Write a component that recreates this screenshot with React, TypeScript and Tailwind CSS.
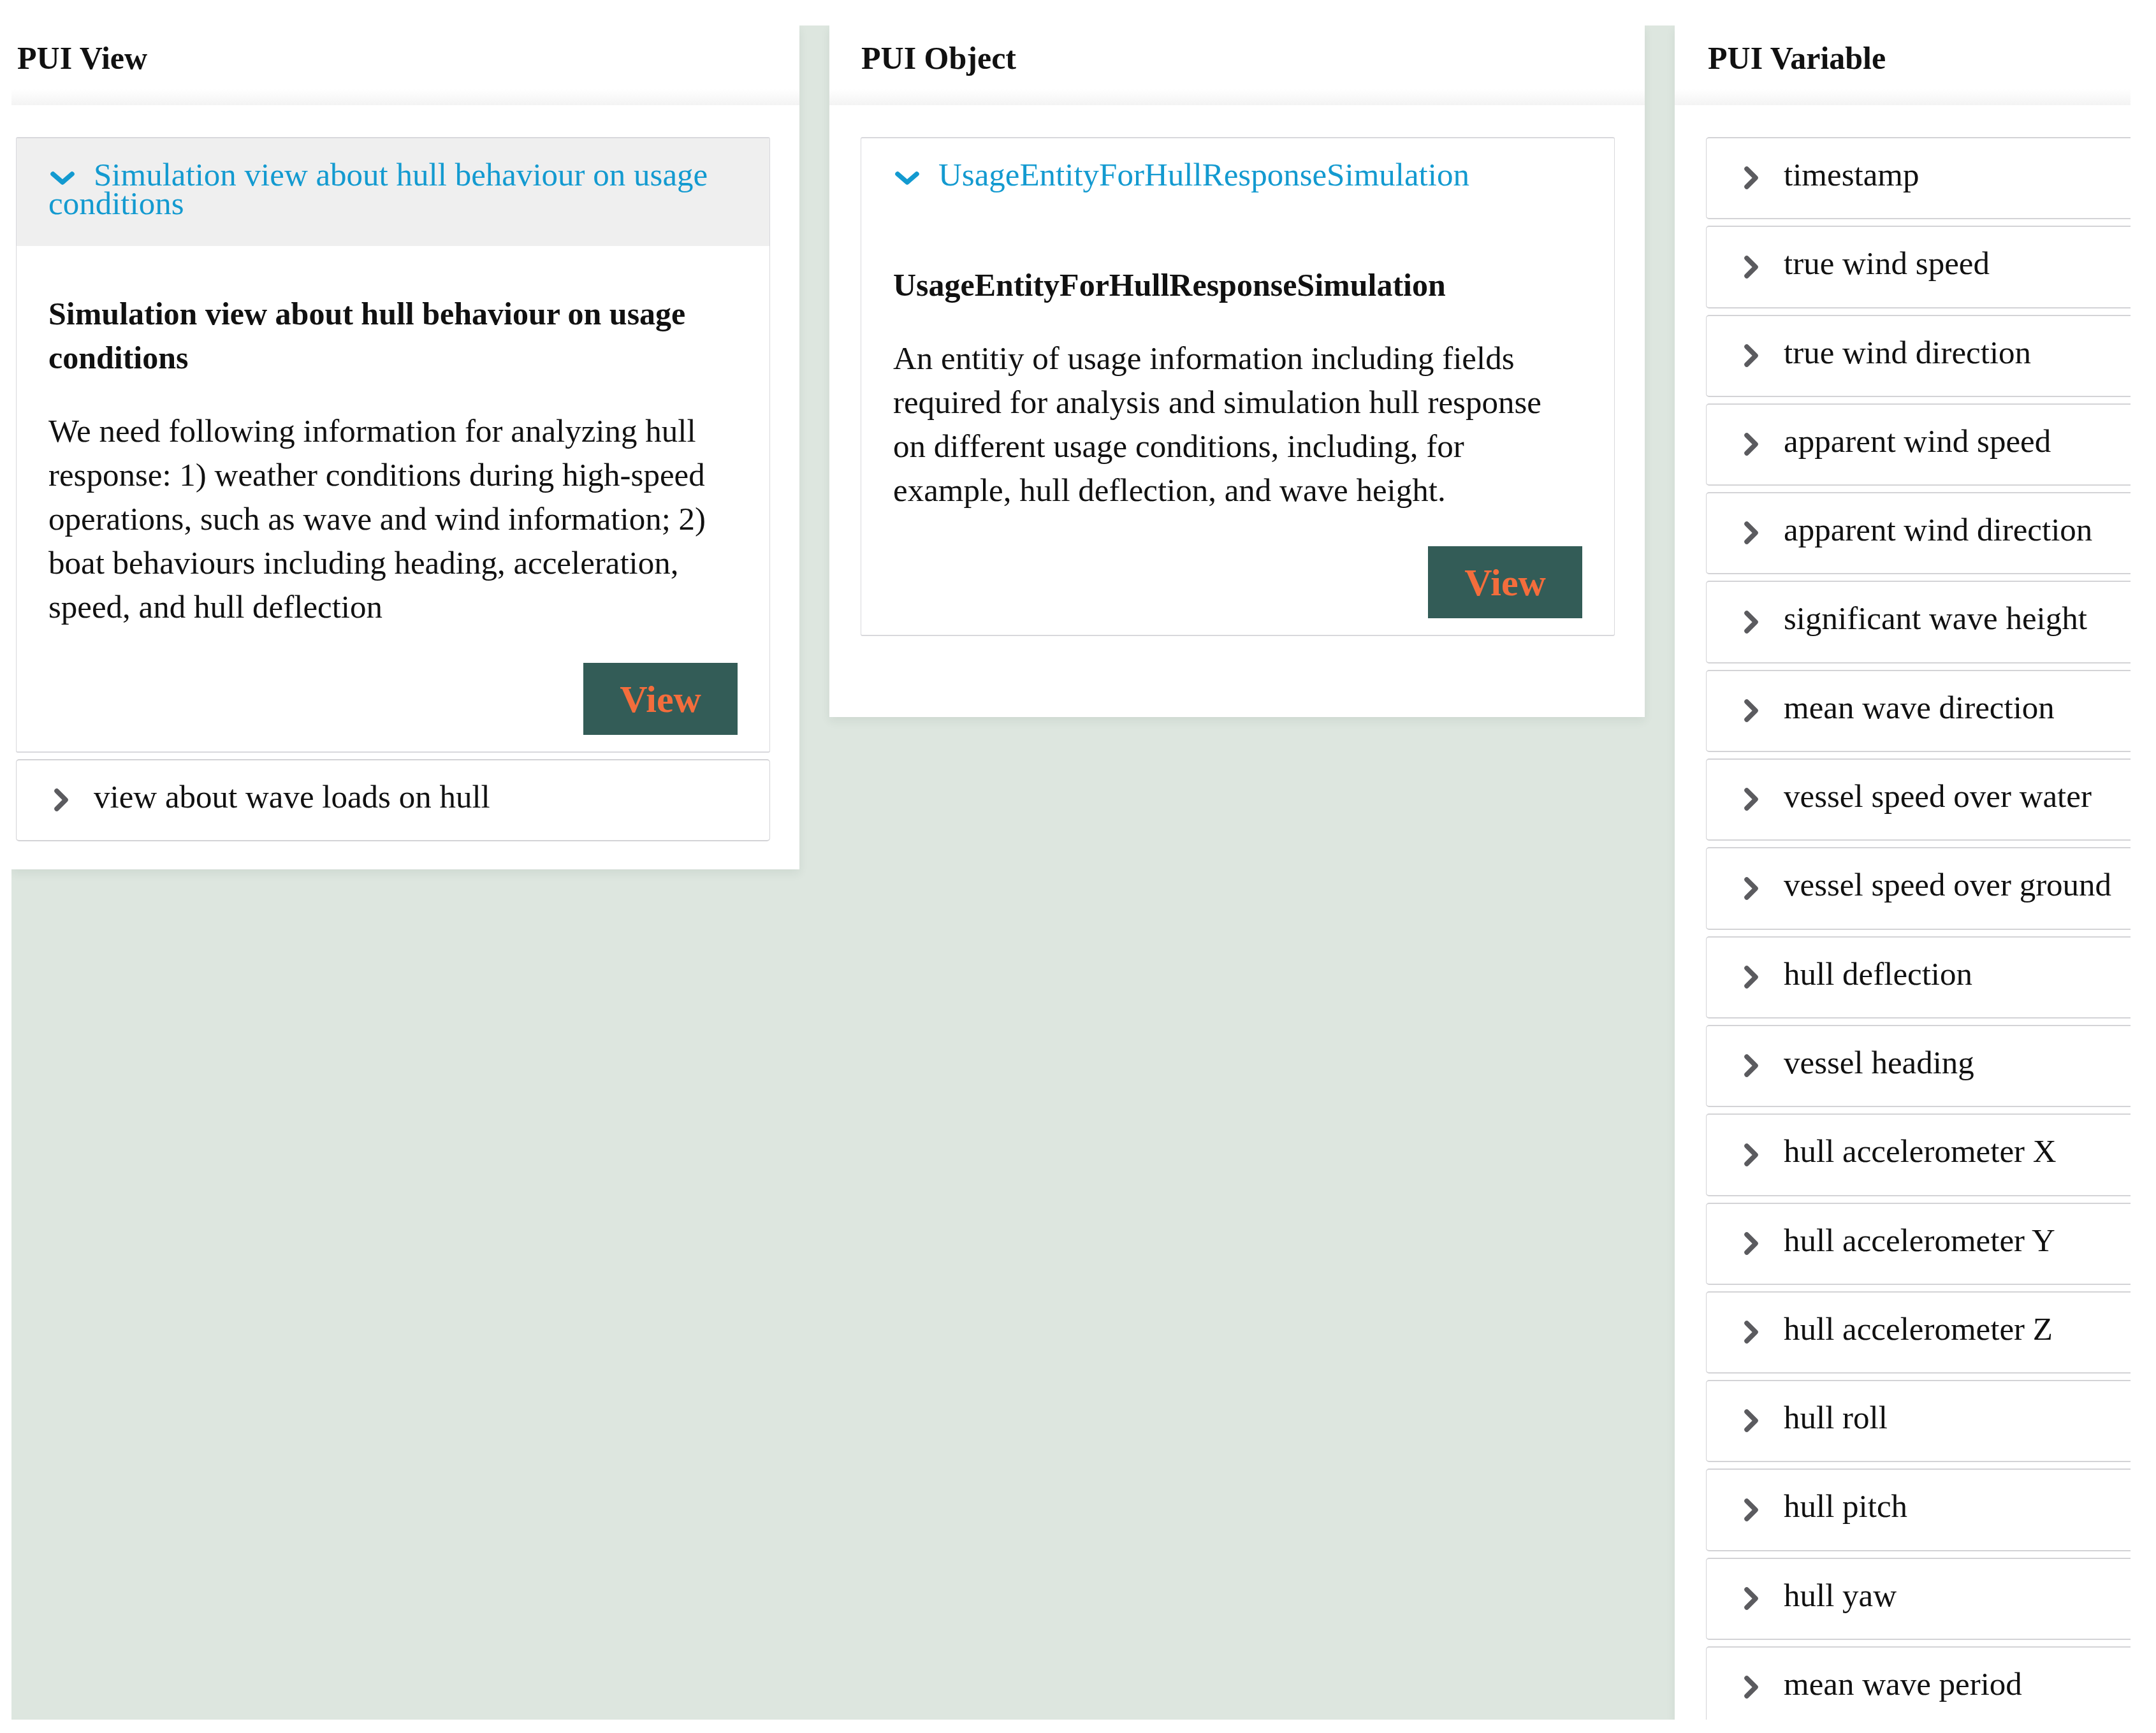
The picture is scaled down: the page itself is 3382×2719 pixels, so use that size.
import type { ReactNode } from "react";

const variables = [
  "timestamp",
  "true wind speed",
  "true wind direction",
  "apparent wind speed",
  "apparent wind direction",
  "significant wave height",
  "mean wave direction",
  "vessel speed over water",
  "vessel speed over ground",
  "hull deflection",
  "vessel heading",
  "hull accelerometer X",
  "hull accelerometer Y",
  "hull accelerometer Z",
  "hull roll",
  "hull pitch",
  "hull yaw",
  "mean wave period",
];

function ChevronRight() {
  return (
    <svg
      viewBox="0 0 28 38"
      className="ml-[6px] mr-[37px] inline-block h-[38px] w-[28px]"
      fill="none"
      stroke="#5b5b5f"
      strokeWidth="7.5"
      strokeLinecap="round"
      strokeLinejoin="round"
    >
      <polyline points="7,5 21,19 7,33" />
    </svg>
  );
}

function ChevronDown() {
  return (
    <svg
      viewBox="0 0 40 23"
      className="ml-[2px] mr-[29px] inline-block h-[23px] w-[40px]"
      fill="none"
      stroke="#139ad0"
      strokeWidth="7.5"
      strokeLinecap="round"
      strokeLinejoin="round"
    >
      <polyline points="5,5 20,18 35,5" />
    </svg>
  );
}

function Panel({
  title,
  className,
  headerPad,
  bodyPad,
  children,
}: {
  title: string;
  className: string;
  headerPad: string;
  bodyPad: string;
  children: ReactNode;
}) {
  return (
    <section className={`shrink-0 bg-white shadow-[0_6px_14px_rgba(40,60,50,0.08)] ${className}`}>
      <header
        className={`h-[125px] bg-[linear-gradient(to_bottom,#ffffff_80%,#f3f3f3)] pt-[17px] text-[50px] font-bold leading-[69px] text-[#111] ${headerPad}`}
      >
        {title}
      </header>
      <div className={`flex flex-col gap-[10px] pt-[50px] ${bodyPad}`}>{children}</div>
    </section>
  );
}

function CollapsedItem({ label }: { label: string }) {
  return (
    <div className="rounded-[5px] border border-t-2 border-b-2 border-[#d3d3d6] bg-white pb-[44px] pl-[50px] pr-[50px] pt-[35px] text-[51px] leading-[45px] text-[#111]">
      <ChevronRight />
      {label}
    </div>
  );
}

function ExpandedItem({
  title,
  heading,
  body,
  shaded,
}: {
  title: string;
  heading: string;
  body: string;
  shaded?: boolean;
}) {
  return (
    <div className="rounded-[3px] border border-t-2 border-b-2 border-[#d8d8dc] bg-white">
      <div
        className={`pb-[44px] pl-[50px] pr-[50px] pt-[35px] text-[51px] leading-[45px] text-[#139ad0] ${shaded ? "bg-[#efefef]" : ""}`}
      >
        <ChevronDown />
        {title}
      </div>
      <div className="px-[50px] pb-[26px] pt-[72px]">
        <div className="pr-[30px]">
          <h3 className="text-[50px] font-bold leading-[69px] text-[#111]">{heading}</h3>
          <p className="mt-[46px] text-[51px] leading-[69px] text-[#111]">{body}</p>
        </div>
        <div className="mt-[53px] flex justify-end">
          <button className="h-[113px] w-[242px] bg-[#335c57] text-[60px] font-bold leading-none text-[#f46d3c]">
            View
          </button>
        </div>
      </div>
    </div>
  );
}

export default function App() {
  return (
    <div className="h-[2719px] w-[3382px] bg-white pl-[18px] pt-[40px] font-['Liberation_Serif',serif]">
      <div className="flex h-[2658px] w-[3324px] items-start gap-[47px] overflow-hidden bg-[#dde6df]">
        <Panel
          title="PUI View"
          className="w-[1236px] pb-[44px]"
          headerPad="pl-[9px]"
          bodyPad="pl-[7px] pr-[46px]"
        >
          <ExpandedItem
            shaded
            title="Simulation view about hull behaviour on usage conditions"
            heading="Simulation view about hull behaviour on usage conditions"
            body="We need following information for analyzing hull response: 1) weather conditions during high-speed operations, such as wave and wind information; 2) boat behaviours including heading, acceleration, speed, and hull deflection"
          />
          <CollapsedItem label="view about wave loads on hull" />
        </Panel>

        <Panel
          title="PUI Object"
          className="w-[1279px] pb-[127px]"
          headerPad="pl-[50px]"
          bodyPad="pl-[49px] pr-[47px]"
        >
          <ExpandedItem
            title="UsageEntityForHullResponseSimulation"
            heading="UsageEntityForHullResponseSimulation"
            body="An entitiy of usage information including fields required for analysis and simulation hull response on different usage conditions, including, for example, hull deflection, and wave height."
          />
        </Panel>

        <Panel
          title="PUI Variable"
          className="w-[1279px] self-stretch"
          headerPad="pl-[52px]"
          bodyPad="pl-[49px] pr-[47px]"
        >
          {variables.map((v) => (
            <CollapsedItem key={v} label={v} />
          ))}
        </Panel>
      </div>
    </div>
  );
}
